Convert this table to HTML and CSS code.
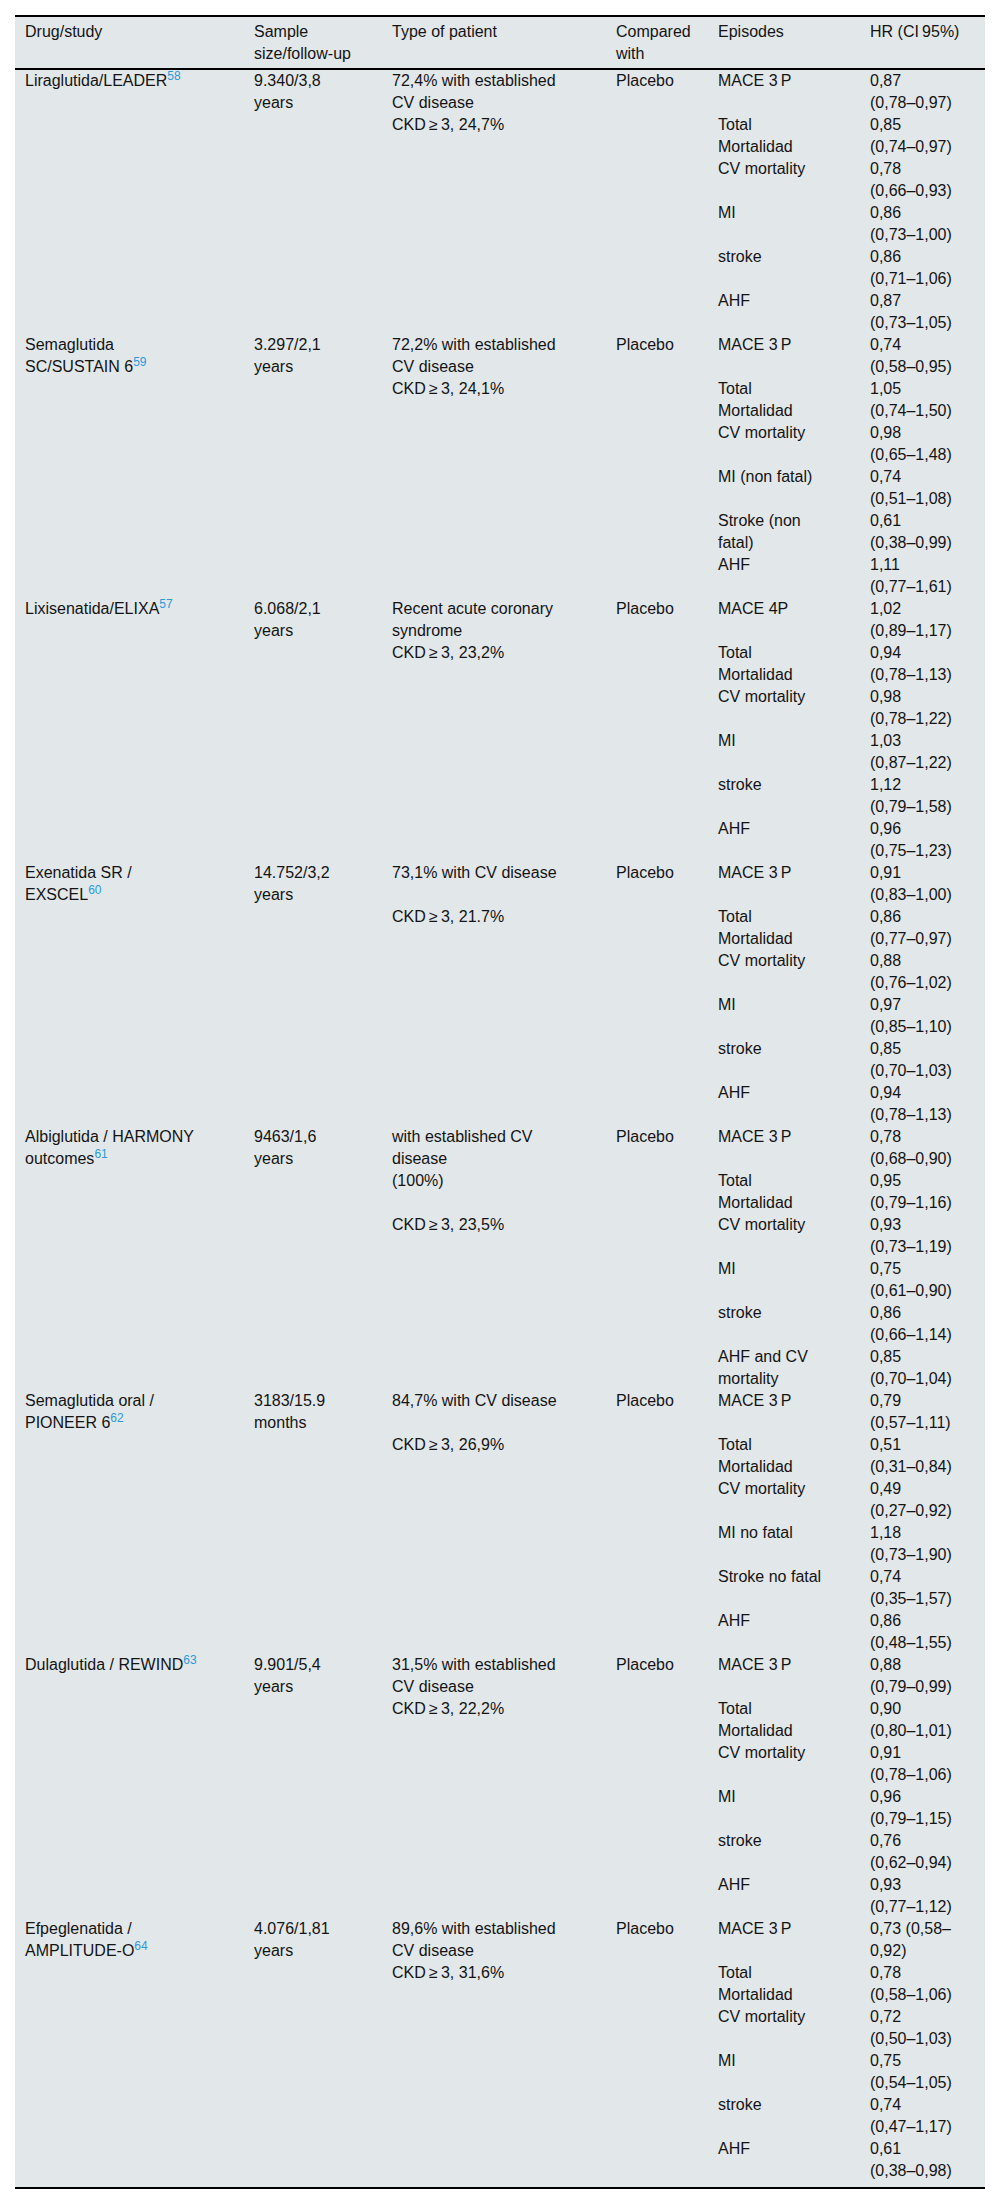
FILE: index.html
```html
<!DOCTYPE html>
<html lang="en">
<head>
<meta charset="utf-8">
<title>GLP-1 RA cardiovascular outcome trials</title>
<link rel="stylesheet" href="styles.css">
</head>
<body>
<div class="wrap">
<table class="data">
  <colgroup>
    <col class="c1"><col class="c2"><col class="c3"><col class="c4"><col class="c5"><col class="c6">
  </colgroup>
  <thead>
    <tr>
      <th class="first">Drug/study</th>
      <th>Sample<br>size/follow-up</th>
      <th>Type of patient</th>
      <th>Compared<br>with</th>
      <th>Episodes</th>
      <th>HR (CI&#8201;95%)</th>
    </tr>
  </thead>
  <tbody>
    <tr>
      <td class="first" rowspan="6">Liraglutida/LEADER<sup class="ref">58</sup></td>
      <td rowspan="6">9.340/3,8<br>years</td>
      <td rowspan="6">72,4% with established<br>CV disease<br>CKD&#8201;≥&#8201;3, 24,7%</td>
      <td rowspan="6">Placebo</td>
      <td>MACE 3&#8201;P</td><td>0,87<br>(0,78–0,97)</td>
    </tr>
    <tr><td>Total<br>Mortalidad</td><td>0,85<br>(0,74–0,97)</td></tr>
    <tr><td>CV mortality</td><td>0,78<br>(0,66–0,93)</td></tr>
    <tr><td>MI</td><td>0,86<br>(0,73–1,00)</td></tr>
    <tr><td>stroke</td><td>0,86<br>(0,71–1,06)</td></tr>
    <tr><td>AHF</td><td>0,87<br>(0,73–1,05)</td></tr>

    <tr>
      <td class="first" rowspan="6">Semaglutida<br>SC/SUSTAIN 6<sup class="ref">59</sup></td>
      <td rowspan="6">3.297/2,1<br>years</td>
      <td rowspan="6">72,2% with established<br>CV disease<br>CKD&#8201;≥&#8201;3, 24,1%</td>
      <td rowspan="6">Placebo</td>
      <td>MACE 3&#8201;P</td><td>0,74<br>(0,58–0,95)</td>
    </tr>
    <tr><td>Total<br>Mortalidad</td><td>1,05<br>(0,74–1,50)</td></tr>
    <tr><td>CV mortality</td><td>0,98<br>(0,65–1,48)</td></tr>
    <tr><td>MI (non fatal)</td><td>0,74<br>(0,51–1,08)</td></tr>
    <tr><td>Stroke (non<br>fatal)</td><td>0,61<br>(0,38–0,99)</td></tr>
    <tr><td>AHF</td><td>1,11<br>(0,77–1,61)</td></tr>

    <tr>
      <td class="first" rowspan="6">Lixisenatida/ELIXA<sup class="ref">57</sup></td>
      <td rowspan="6">6.068/2,1<br>years</td>
      <td rowspan="6">Recent acute coronary<br>syndrome<br>CKD&#8201;≥&#8201;3, 23,2%</td>
      <td rowspan="6">Placebo</td>
      <td>MACE 4P</td><td>1,02<br>(0,89–1,17)</td>
    </tr>
    <tr><td>Total<br>Mortalidad</td><td>0,94<br>(0,78–1,13)</td></tr>
    <tr><td>CV mortality</td><td>0,98<br>(0,78–1,22)</td></tr>
    <tr><td>MI</td><td>1,03<br>(0,87–1,22)</td></tr>
    <tr><td>stroke</td><td>1,12<br>(0,79–1,58)</td></tr>
    <tr><td>AHF</td><td>0,96<br>(0,75–1,23)</td></tr>

    <tr>
      <td class="first" rowspan="6">Exenatida SR /<br>EXSCEL<sup class="ref">60</sup></td>
      <td rowspan="6">14.752/3,2<br>years</td>
      <td rowspan="6">73,1% with CV disease<br>&nbsp;<br>CKD&#8201;≥&#8201;3, 21.7%</td>
      <td rowspan="6">Placebo</td>
      <td>MACE 3&#8201;P</td><td>0,91<br>(0,83–1,00)</td>
    </tr>
    <tr><td>Total<br>Mortalidad</td><td>0,86<br>(0,77–0,97)</td></tr>
    <tr><td>CV mortality</td><td>0,88<br>(0,76–1,02)</td></tr>
    <tr><td>MI</td><td>0,97<br>(0,85–1,10)</td></tr>
    <tr><td>stroke</td><td>0,85<br>(0,70–1,03)</td></tr>
    <tr><td>AHF</td><td>0,94<br>(0,78–1,13)</td></tr>

    <tr>
      <td class="first" rowspan="6">Albiglutida / HARMONY<br>outcomes<sup class="ref">61</sup></td>
      <td rowspan="6">9463/1,6<br>years</td>
      <td rowspan="6">with established CV<br>disease<br>(100%)<br>&nbsp;<br>CKD&#8201;≥&#8201;3, 23,5%</td>
      <td rowspan="6">Placebo</td>
      <td>MACE 3&#8201;P</td><td>0,78<br>(0,68–0,90)</td>
    </tr>
    <tr><td>Total<br>Mortalidad</td><td>0,95<br>(0,79–1,16)</td></tr>
    <tr><td>CV mortality</td><td>0,93<br>(0,73–1,19)</td></tr>
    <tr><td>MI</td><td>0,75<br>(0,61–0,90)</td></tr>
    <tr><td>stroke</td><td>0,86<br>(0,66–1,14)</td></tr>
    <tr><td>AHF and CV<br>mortality</td><td>0,85<br>(0,70–1,04)</td></tr>

    <tr>
      <td class="first" rowspan="6">Semaglutida oral /<br>PIONEER 6<sup class="ref">62</sup></td>
      <td rowspan="6">3183/15.9<br>months</td>
      <td rowspan="6">84,7% with CV disease<br>&nbsp;<br>CKD&#8201;≥&#8201;3, 26,9%</td>
      <td rowspan="6">Placebo</td>
      <td>MACE 3&#8201;P</td><td>0,79<br>(0,57–1,11)</td>
    </tr>
    <tr><td>Total<br>Mortalidad</td><td>0,51<br>(0,31–0,84)</td></tr>
    <tr><td>CV mortality</td><td>0,49<br>(0,27–0,92)</td></tr>
    <tr><td>MI no fatal</td><td>1,18<br>(0,73–1,90)</td></tr>
    <tr><td>Stroke no fatal</td><td>0,74<br>(0,35–1,57)</td></tr>
    <tr><td>AHF</td><td>0,86<br>(0,48–1,55)</td></tr>

    <tr>
      <td class="first" rowspan="6">Dulaglutida / REWIND<sup class="ref">63</sup></td>
      <td rowspan="6">9.901/5,4<br>years</td>
      <td rowspan="6">31,5% with established<br>CV disease<br>CKD&#8201;≥&#8201;3, 22,2%</td>
      <td rowspan="6">Placebo</td>
      <td>MACE 3&#8201;P</td><td>0,88<br>(0,79–0,99)</td>
    </tr>
    <tr><td>Total<br>Mortalidad</td><td>0,90<br>(0,80–1,01)</td></tr>
    <tr><td>CV mortality</td><td>0,91<br>(0,78–1,06)</td></tr>
    <tr><td>MI</td><td>0,96<br>(0,79–1,15)</td></tr>
    <tr><td>stroke</td><td>0,76<br>(0,62–0,94)</td></tr>
    <tr><td>AHF</td><td>0,93<br>(0,77–1,12)</td></tr>

    <tr>
      <td class="first" rowspan="6">Efpeglenatida /<br>AMPLITUDE-O<sup class="ref">64</sup></td>
      <td rowspan="6">4.076/1,81<br>years</td>
      <td rowspan="6">89,6% with established<br>CV disease<br>CKD&#8201;≥&#8201;3, 31,6%</td>
      <td rowspan="6">Placebo</td>
      <td>MACE 3&#8201;P</td><td>0,73 (0,58–<br>0,92)</td>
    </tr>
    <tr><td>Total<br>Mortalidad</td><td>0,78<br>(0,58–1,06)</td></tr>
    <tr><td>CV mortality</td><td>0,72<br>(0,50–1,03)</td></tr>
    <tr><td>MI</td><td>0,75<br>(0,54–1,05)</td></tr>
    <tr><td>stroke</td><td>0,74<br>(0,47–1,17)</td></tr>
    <tr class="last"><td>AHF</td><td>0,61<br>(0,38–0,98)</td></tr>
  </tbody>
</table>
</div>
</body>
</html>
```

FILE: styles.css
```css
html, body {
  margin: 0;
  padding: 0;
  background: #ffffff;
}

body {
  font-family: "Liberation Sans", Arial, Helvetica, sans-serif;
  font-size: 16px;
  color: #141414;
}

.wrap {
  padding: 15px 15px 14px 15px;
}

.data {
  width: 970px;
  table-layout: fixed;
  border-collapse: separate;
  border-spacing: 0;
  background: #e2e7ea;
  border-top: 2px solid #000;
  border-bottom: 2px solid #000;
  line-height: 22px;
}

.c1 { width: 239px; }
.c2 { width: 138px; }
.c3 { width: 224px; }
.c4 { width: 102px; }
.c5 { width: 152px; }
.c6 { width: 115px; }

.data th,
.data td {
  padding: 0 6px 0 0;
  text-align: left;
  vertical-align: top;
  font-weight: normal;
}

.data .first {
  padding-left: 10px;
}

.data thead th {
  padding-top: 4px;
  padding-bottom: 3px;
  border-bottom: 2px solid #000;
}

.data tr.last td {
  padding-bottom: 5px;
}

.ref {
  color: #2b9ad8;
  font-size: 12px;
  line-height: 0;
  vertical-align: 6px;
}
```
